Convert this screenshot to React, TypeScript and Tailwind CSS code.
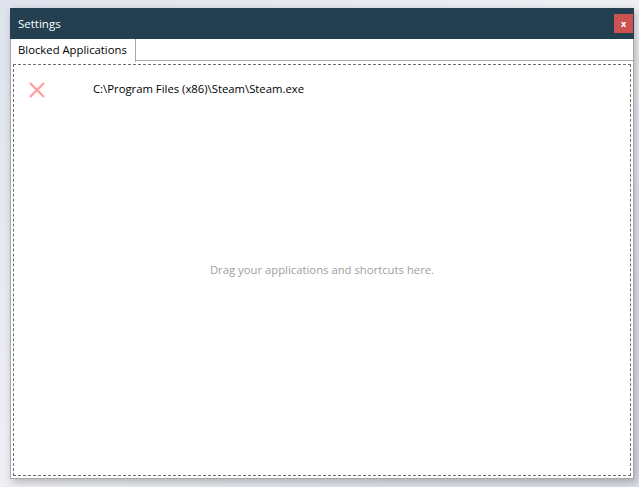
import React from "react";

export default function App() {
  const font = { fontFamily: '"Segoe UI", "Open Sans", "Noto Sans", sans-serif' };
  return (
    <div
      className="w-[639px] h-[487px] bg-gradient-to-br from-[#dfe3ec] via-[#eef0f4] to-[#d9dde8] pt-[8px] pl-[10px] overflow-hidden"
      style={font}
    >
      <div className="w-[624px] h-[471px] flex flex-col bg-white shadow-[2px_3px_8px_rgba(0,0,0,0.25)]">
        <div className="h-[31px] bg-[#233f50] flex items-center justify-between pl-[8px] pr-[1px]">
          <span className="text-white text-[11.5px] leading-none">Settings</span>
          <div className="w-[19px] h-[19px] bg-[#cc5352] flex items-center justify-center text-white text-[9px] font-bold leading-none pb-[1px]">
            x
          </div>
        </div>
        <div className="flex-1 flex flex-col border-l border-r border-b border-[#a8a8a8]">
          <div className="h-[22px] flex">
            <div className="w-[125px] h-[23px] border-r border-[#a8a8a8] bg-white flex items-center pl-[7px] text-[11.3px] text-black z-10">
              Blocked Applications
            </div>
            <div className="flex-1 border-b border-[#a8a8a8]" />
          </div>
          <div className="flex-1 p-[2px] pt-[3px]">
            <div className="w-full h-full border border-dashed border-[#6e6e6e] grid grid-cols-1 grid-rows-1">
              <div className="[grid-area:1/1] flex items-center justify-center">
                <span className="text-[11.3px] text-[#a0a0a0]">Drag your applications and shortcuts here.</span>
              </div>
              <div className="[grid-area:1/1] flex items-start">
                <div className="flex items-center h-[49px] w-full">
                  <div className="w-[79px] pl-[15px]">
                    <svg width="16" height="16" viewBox="0 0 16 16">
                      <path d="M1 1 L15 15 M15 1 L1 15" stroke="#ffa0a0" strokeWidth="2.4" strokeLinecap="butt" />
                    </svg>
                  </div>
                  <span className="text-[11.3px] text-black">C:\Program Files (x86)\Steam\Steam.exe</span>
                </div>
              </div>
            </div>
          </div>
        </div>
      </div>
    </div>
  );
}
